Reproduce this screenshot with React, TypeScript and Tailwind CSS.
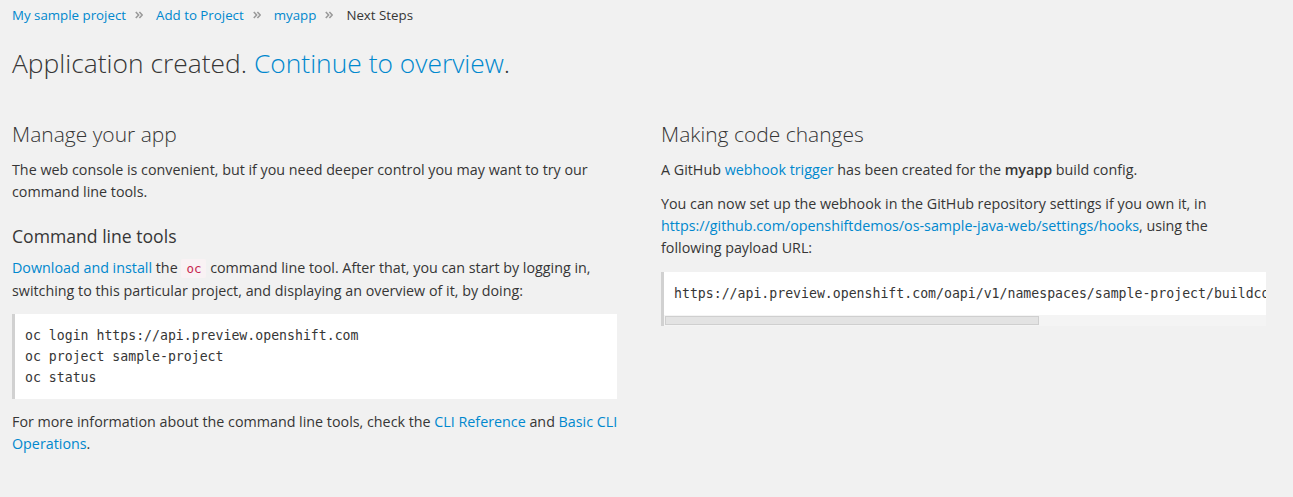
import React from "react";

const sans = { fontFamily: '"Open Sans", "Noto Sans", sans-serif' };

const Chevrons = () => (
  <svg width="8" height="8" viewBox="0 0 8 8" className="ml-[9px] mr-[13px]" fill="none" stroke="#9a9a9a" strokeWidth="1.6">
    <path d="M0.8 1 L3.6 4 L0.8 7" />
    <path d="M4.4 1 L7.2 4 L4.4 7" />
  </svg>
);

const Crumb = ({ children, last }: { children: React.ReactNode; last?: boolean }) => (
  <li className="flex items-center">
    {last ? (
      <span className="text-[#363636]">{children}</span>
    ) : (
      <>
        <a className="text-[#0088ce]">{children}</a>
        <Chevrons />
      </>
    )}
  </li>
);

const Link = ({ children }: { children: React.ReactNode }) => (
  <a className="text-[#0088ce]">{children}</a>
);

export default function App() {
  return (
    <div
      className="min-h-[497px] w-full bg-[#f1f1f1] px-3 text-[14.3px] leading-[22px] text-[#363636]"
      style={sans}
    >
      <ol className="flex h-[30px] items-center text-[13.3px]">
        <Crumb>My sample project</Crumb>
        <Crumb>Add to Project</Crumb>
        <Crumb>myapp</Crumb>
        <Crumb last>Next Steps</Crumb>
      </ol>

      <h1 className="mt-[16px] text-[26.4px] font-light leading-[34px] text-[#363636]">
        Application created. <Link>Continue to overview</Link>.
      </h1>

      <div className="mt-[40px] grid w-[1254px] grid-cols-[605px_605px] gap-[44px]">
        <div>
          <h2 className="text-[21px] font-light leading-[28px]">Manage your app</h2>
          <p className="mt-[11px] whitespace-nowrap">
            The web console is convenient, but if you need deeper control you may want to try our
            <br />
            command line tools.
          </p>

          <h3 className="mt-[21px] text-[17.6px] leading-[24px]">Command line tools</h3>
          <p className="mt-[9px] whitespace-nowrap">
            <Link>Download and install</Link> the{" "}
            <code className="rounded-[2px] bg-[#f9f2f4] px-[5px] py-[2px] font-['DejaVu_Sans_Mono',monospace] text-[12.5px] text-[#c7254e]">
              oc
            </code>{" "}
            command line tool. After that, you can start by logging in,
            <br />
            switching to this particular project, and displaying an overview of it, by doing:
          </p>

          <pre className="mt-[12px] border-l-[3px] border-[#d1d1d1] bg-white px-[10px] py-[11px] font-['DejaVu_Sans_Mono',monospace] text-[13.2px] leading-[21px] text-[#363636]">
            {"oc login https://api.preview.openshift.com\noc project sample-project\noc status"}
          </pre>

          <p className="mt-[12px] whitespace-nowrap">
            For more information about the command line tools, check the <Link>CLI Reference</Link>{" "}
            and <Link>Basic CLI</Link>
            <br />
            <Link>Operations</Link>.
          </p>
        </div>

        <div>
          <h2 className="text-[21px] font-light leading-[28px]">Making code changes</h2>
          <p className="mt-[11px] whitespace-nowrap">
            A GitHub <Link>webhook trigger</Link> has been created for the{" "}
            <strong className="font-semibold">myapp</strong> build config.
          </p>
          <p className="mt-[12px] whitespace-nowrap">
            You can now set up the webhook in the GitHub repository settings if you own it, in
            <br />
            <Link>https://github.com/openshiftdemos/os-sample-java-web/settings/hooks</Link>, using the
            <br />
            following payload URL:
          </p>

          <div className="mt-[13px] border-l-[3px] border-[#d1d1d1] bg-white">
            <pre className="overflow-hidden whitespace-nowrap px-[10px] pt-[11px] pb-[11px] font-['DejaVu_Sans_Mono',monospace] text-[13.2px] leading-[21px]">
              https://api.preview.openshift.com/oapi/v1/namespaces/sample-project/buildconfigs/myapp/webhooks/secret/github
            </pre>
            <div className="h-[11px] bg-[#f4f4f4] px-[1px] py-[1px]">
              <div className="h-full w-[374px] border border-[#cfcfcf] bg-[#e3e3e3]" />
            </div>
          </div>
        </div>
      </div>
    </div>
  );
}
